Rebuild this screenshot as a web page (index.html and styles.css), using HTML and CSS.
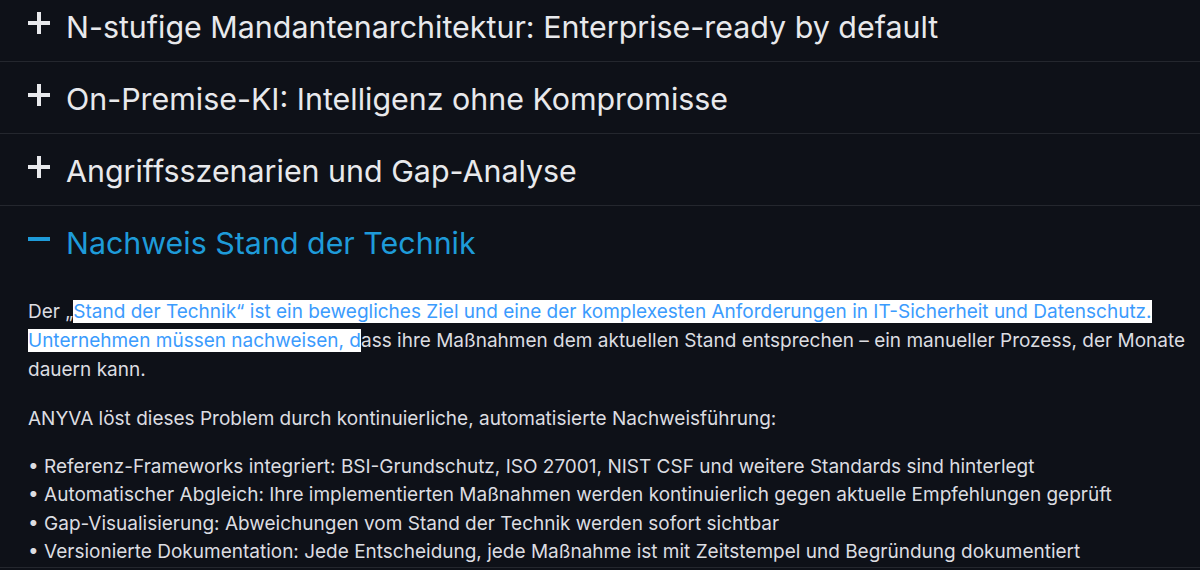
FILE: index.html
```html
<!DOCTYPE html>
<html lang="de">
<head>
    <meta charset="UTF-8">
    <meta name="viewport" content="width=device-width, initial-scale=1.0">
    <title>Funktionen</title>
    <link rel="stylesheet" href="styles.css">
</head>
<body>

    <div class="accordion">
        <div class="item">
            <button class="item-head">
                <svg class="icon" viewBox="0 0 22 22"><path d="M11 0v22M0 11h22"/></svg>
                <span>N-stufige Mandantenarchitektur: Enterprise-ready by default</span>
            </button>
        </div>
        <div class="item">
            <button class="item-head">
                <svg class="icon" viewBox="0 0 22 22"><path d="M11 0v22M0 11h22"/></svg>
                <span>On-Premise-KI: Intelligenz ohne Kompromisse</span>
            </button>
        </div>
        <div class="item">
            <button class="item-head">
                <svg class="icon" viewBox="0 0 22 22"><path d="M11 0v22M0 11h22"/></svg>
                <span>Angriffsszenarien und Gap-Analyse</span>
            </button>
        </div>
        <div class="item open">
            <button class="item-head">
                <svg class="icon" viewBox="0 0 22 22"><path d="M0 11h22"/></svg>
                <span>Nachweis Stand der Technik</span>
            </button>
            <div class="item-body">
                <p>Der „<span class="marked">Stand der Technik“ ist ein bewegliches Ziel und eine der komplexesten Anforderungen in IT-Sicherheit und Datenschutz.</span> <span class="marked">Unternehmen müssen nachweisen, d</span>ass ihre Maßnahmen dem aktuellen Stand entsprechen – ein manueller Prozess, der Monate dauern kann.</p>
                <p>ANYVA löst dieses Problem durch kontinuierliche, automatisierte Nachweisführung:</p>
                <ul>
                    <li>Referenz-Frameworks integriert: BSI-Grundschutz, ISO 27001, NIST CSF und weitere Standards sind hinterlegt</li>
                    <li>Automatischer Abgleich: Ihre implementierten Maßnahmen werden kontinuierlich gegen aktuelle Empfehlungen geprüft</li>
                    <li>Gap-Visualisierung: Abweichungen vom Stand der Technik werden sofort sichtbar</li>
                    <li>Versionierte Dokumentation: Jede Entscheidung, jede Maßnahme ist mit Zeitstempel und Begründung dokumentiert</li>
                </ul>
            </div>
        </div>
    </div>

</body>
</html>
```

FILE: styles.css
```css
body {
    font-family: Inter, "Noto Sans", sans-serif;
    background-color: #0e1118;
    color: #dcdde1;
    margin: 0;
}
.accordion {
    margin-top: -10px;
}
.item {
    border-bottom: 1px solid #24272e;
}
.item-head {
    display: flex;
    align-items: center;
    gap: 16px;
    width: 100%;
    height: 71px;
    padding: 0 28px;
    background: none;
    border: none;
    color: #e8e9ec;
    font-family: inherit;
    font-size: 30.4px;
    text-align: left;
    cursor: pointer;
}
.item-head span {
    margin-top: 2px;
}
.icon {
    width: 22px;
    height: 22px;
    flex-shrink: 0;
    margin-top: -6px;
    fill: none;
    stroke: currentColor;
    stroke-width: 4;
}
.open .item-head {
    color: #1e9bd9;
}
.item-body {
    padding: 20px 12px 0 28px;
    font-size: 19px;
    line-height: 29px;
}
.item-body p {
    margin: 0 0 20px;
}
.item-body ul {
    list-style: none;
    margin: 0;
    padding: 0;
}
.item-body li {
    line-height: 28.4px;
}
.item-body li::before {
    content: "• ";
}
.marked {
    background: #ffffff;
    color: #3b9bfd;
}
```
